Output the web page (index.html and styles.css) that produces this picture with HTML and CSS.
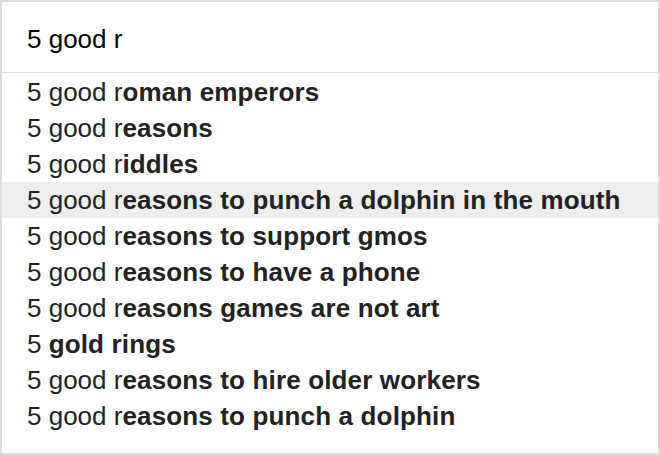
FILE: index.html
```html
<!DOCTYPE html>
<html>
<head>
<meta charset="utf-8">
<link rel="stylesheet" href="styles.css">
</head>
<body>
<div class="box">
  <div class="query">5 good r</div>
  <ul class="list">
    <li class="item">5 good r<b>oman emperors</b></li>
    <li class="item">5 good r<b>easons</b></li>
    <li class="item">5 good r<b>iddles</b></li>
    <li class="item active">5 good r<b>easons to punch a dolphin in the mouth</b></li>
    <li class="item">5 good r<b>easons to support gmos</b></li>
    <li class="item">5 good r<b>easons to have a phone</b></li>
    <li class="item">5 good r<b>easons games are not art</b></li>
    <li class="item">5 <b>gold rings</b></li>
    <li class="item">5 good r<b>easons to hire older workers</b></li>
    <li class="item">5 good r<b>easons to punch a dolphin</b></li>
  </ul>
</div>
</body>
</html>
```
FILE: styles.css
```css
html, body {
  margin: 0;
  padding: 0;
  background: #fff;
}
.box {
  box-sizing: border-box;
  width: 660px;
  height: 455px;
  border: 2px solid #dcdcdc;
  font-family: "Liberation Sans", Arial, sans-serif;
  font-size: 26px;
  overflow: hidden;
}
.query {
  box-sizing: border-box;
  height: 71px;
  padding: 4px 0 0 25px;
  display: flex;
  align-items: center;
  color: #000;
  border-bottom: 1px solid #e0e0e0;
}
.list {
  list-style: none;
  margin: 0;
  padding: 1px 0 0 0;
}
.item {
  height: 36px;
  line-height: 36px;
  padding-left: 25px;
  color: #222;
  white-space: nowrap;
}
.item b {
  font-weight: bold;
  letter-spacing: 0.15px;
}
.active {
  background: #eeeeee;
}
```
